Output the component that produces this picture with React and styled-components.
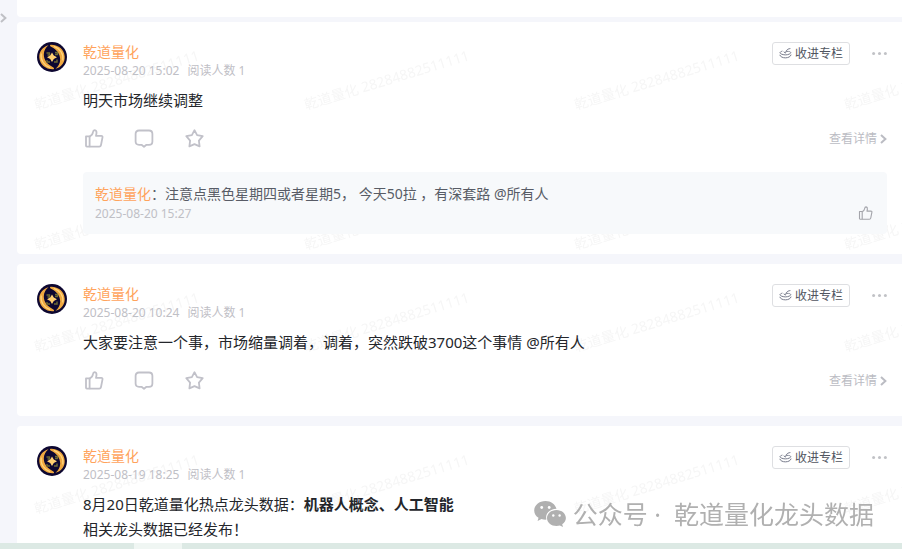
import React from 'react'
import styled, {createGlobalStyle} from 'styled-components'

const GlobalStyle = createGlobalStyle`
  * {
    box-sizing: border-box;
  }

  body {
    margin: 0;
    background: #f5f6fb;
    color: #24262b;
    font-family: 'Noto Sans', 'Noto Sans CJK SC', sans-serif;
    font-size: 15px;
  }

  button {
    display: block;
    font: inherit;
    color: inherit;
    padding: 0;
    border: 0;
    background: none;
    cursor: pointer;
  }

  p {
    margin: 0;
  }

  svg {
    display: block;
    flex: none;
  }
`

const Page = styled.div`
  height: 100vh;
  display: flex;
  flex-direction: column;
  overflow: hidden;
`

const Main = styled.div`
  flex: 1;
  min-height: 0;
  display: flex;
`

const Sidebar = styled.aside`
  width: 17px;
  flex: none;
  padding-top: 13px;
  color: #bfc0c5;
`

const Feed = styled.main`
  flex: 1;
  min-width: 0;
  overflow: hidden;
`

const PreviousCard = styled.div`
  height: 17px;
  margin-bottom: 5px;
  background: #fff;
  border-radius: 0 0 0 4px;
`

const StyledCard = styled.article`
  position: relative;
  display: flex;
  gap: 16px;
  padding: 20px 15px 20px 20px;
  margin-bottom: 10px;
  background: #fff;
  border-radius: 4px 0 0 4px;
  overflow: hidden;
`

const StyledMark = styled.svg`
  position: absolute;
  inset: 0;
  width: 100%;
  height: 100%;
  pointer-events: none;
`

const CardBody = styled.div`
  position: relative;
  flex: 1;
  min-width: 0;
`

const CardHeader = styled.header`
  display: flex;
  align-items: flex-start;
  justify-content: space-between;
`

const Author = styled.a`
  color: #ffa35c;
  font-size: 14px;
  line-height: 20px;
  text-decoration: none;
`

const AuthorInfo = styled.div`
  display: flex;
  flex-direction: column;
`

const Meta = styled.p`
  display: flex;
  gap: 8px;
  color: #bfc0c6;
  font-size: 12px;
  line-height: ${props => (props.$tall ? '20px' : '18px')};
`

const HeaderTools = styled.div`
  display: flex;
  align-items: center;
  gap: 22px;
`

const ColumnButton = styled.button`
  && {
    display: flex;
    align-items: center;
    gap: 3px;
    height: 23px;
    padding: 0 6px;
    border: 1px solid #dedfe2;
    border-radius: 3px;
    background: #fff;
    color: #51555f;
    font-size: 12px;
    line-height: 20px;
  }
`

const Content = styled.div`
  margin-top: 8px;
  line-height: 25px;
`

const Actions = styled.div`
  display: flex;
  align-items: center;
  gap: 30px;
  height: 30px;
  margin-top: 11px;
  padding-left: 1px;
  color: #c1c1c9;
`

const DetailLink = styled.a`
  display: flex;
  align-items: center;
  gap: 3px;
  margin-left: auto;
  color: #bbbcc3;
  font-size: 12px;
  line-height: 20px;
  text-decoration: none;
`

const Reply = styled.div`
  display: flex;
  align-items: flex-end;
  justify-content: space-between;
  margin-top: 18px;
  padding: 12px 14px 10px 12px;
  border-radius: 4px;
  background: #f7f9fb;
  color: #585c66;
  font-size: 14px;
  line-height: 20px;
`

const ReplyLike = styled.button`
  && {
    height: 18px;
    margin-bottom: 2px;
    color: #a4a5ab;
  }
`

const BottomBar = styled.div`
  flex: none;
  display: flex;
  height: 6px;
  padding-left: 134px;
  background: #dce9e4;
`

const BottomTab = styled.div`
  width: 48px;
  background: #f0f6f3;
`

const AccountBadge = styled.div`
  position: fixed;
  right: 28px;
  bottom: 17px;
  display: flex;
  align-items: center;
  gap: 7px;
  color: #b0b0b0;
  font-size: 25px;
  line-height: 36px;
  white-space: pre;
  pointer-events: none;
`

const posts = [
  {
    id: 1,
    time: '2025-08-20 15:02',
    lines: ['明天市场继续调整'],
    actions: true,
    reply: {
      text: '：注意点黑色星期四或者星期5， 今天50拉 ，有深套路 @所有人',
      time: '2025-08-20 15:27'
    }
  },
  {
    id: 2,
    time: '2025-08-20 10:24',
    lines: ['大家要注意一个事，市场缩量调着，调着，突然跌破3700这个事情 @所有人'],
    actions: true
  },
  {
    id: 3,
    time: '2025-08-19 18:25',
    lines: [
      <>8月20日乾道量化热点龙头数据：<b>机器人概念、人工智能</b></>,
      '相关龙头数据已经发布！'
    ]
  }
]

function Chevron({width, height}) {
  return (
    <svg width={width} height={height} viewBox="0 0 7 10" fill="none" stroke="currentColor" strokeWidth="2">
      <path d="M1 1 L5.4 5 L1 9" />
    </svg>
  )
}

function LikeIcon({size, stroke}) {
  return (
    <svg
      width={size}
      height={size}
      viewBox="0 0 20 20"
      fill="none"
      stroke="currentColor"
      strokeWidth={stroke}
      strokeLinejoin="round"
    >
      <path d="M2 7.3 H5.6 V17.6 H2.8 Q2 17.6 2 16.8 Z" />
      <path d="M5.6 7.6 Q8.6 6.2 9 3 Q9.2 1.1 10.7 1.1 Q12.8 1.4 12.5 4.1 L12 6.8 H17.2 Q18.8 6.8 18.5 8.4 L17 16 Q16.7 17.6 15.2 17.6 H5.6" />
    </svg>
  )
}

function CommentIcon() {
  return (
    <svg width="20" height="20" viewBox="0 0 20 20" fill="none" stroke="currentColor" strokeWidth="1.8" strokeLinejoin="round">
      <path d="M5 1.5 H15 Q18.4 1.5 18.4 4.9 V12.4 Q18.4 15.8 15 15.8 H12.5 L10 17.8 L7.5 15.8 H5 Q1.6 15.8 1.6 12.4 V4.9 Q1.6 1.5 5 1.5 Z" />
    </svg>
  )
}

function StarIcon() {
  return (
    <svg width="20" height="20" viewBox="0 0 20 20" fill="none" stroke="currentColor" strokeWidth="1.8" strokeLinejoin="round">
      <path d="M10.5 1.2 L13.1 6.1 L18.7 7.2 L14.9 11.6 L15.6 17.4 L10.5 15.1 L5.4 17.4 L6.1 11.6 L2.3 7.2 L7.9 6.1 Z" />
    </svg>
  )
}

function ColumnIcon() {
  return (
    <svg width="13" height="13" viewBox="0 0 13 13" fill="none" stroke="#777b8b" strokeWidth="1" strokeLinecap="round">
      <path d="M3 4.2 C0 5.2 0.5 6.4 3 7.3 C5.5 8.2 8 8 10 7.2 C12.3 6.2 12.3 5.2 10.6 4.6" />
      <path d="M0.9 8.2 C1.8 11.9 11.2 11.9 12 8" />
      <path d="M5 5 L6.5 6.1 C7 4 7.5 2 11 1.6" />
      <path d="M7.4 4.2 L9.3 4.4" />
    </svg>
  )
}

function MoreIcon() {
  return (
    <svg width="15" height="5" viewBox="0 0 15 5" fill="#c1c2c6">
      <circle cx="1.6" cy="2.5" r="1.5" />
      <circle cx="7.5" cy="2.5" r="1.5" />
      <circle cx="13.4" cy="2.5" r="1.5" />
    </svg>
  )
}

function Avatar() {
  return (
    <svg width="30" height="30" viewBox="0 0 30 30">
      <circle cx="15" cy="15" r="15" fill="#0d0731" />
      <path d="M11.5 3.2 C5 5 2 10 2.3 15.5 C2.8 22.5 8.5 27.6 16.5 27.3 C17.5 26.8 17 25.8 16 25.2 C10.5 22.5 6.8 18 6.8 12.5 C6.8 8.5 8.8 5.5 11.5 3.2 Z" fill="#efa840" />
      <path d="M18.5 26.8 C25 25 28 20 27.7 14.5 C27.2 7.5 21.5 2.4 13.5 2.7 C12.5 3.2 13 4.2 14 4.8 C19.5 7.5 23.2 12 23.2 17.5 C23.2 21.5 21.2 24.5 18.5 26.8 Z" fill="#efa840" />
      <path d="M4.2 11.5 C3.2 18 7 23.5 13 25.6" fill="none" stroke="#ffd67f" strokeWidth="1.2" />
      <path d="M25.8 18.5 C26.8 12 23 6.5 17 4.4" fill="none" stroke="#ffd67f" strokeWidth="1.2" />
      <path d="M9.5 11 H12.5 V13 H10.5 M18 10.5 H20.5 V12.5 H18 M10 18 V20 H13 M17 20 H20 V17.5" fill="none" stroke="#6d6a35" strokeWidth="1.4" />
      <path d="M15 10.5 L16.8 13.4 L20 15.2 L16.8 17 L15 20 L13.2 17 L10 15.2 L13.2 13.4 Z" fill="#ffcf72" />
    </svg>
  )
}

function WechatIcon() {
  return (
    <svg width="32" height="28" viewBox="0 0 32 28" fill="currentColor">
      <path d="M11.5 1 C5.2 1 0.2 5.2 0.2 10.4 C0.2 13.5 1.9 16 4.5 17.7 L3.6 21.1 L7.5 19 C8.9 19.5 10.7 19.7 12.4 19.6 C11 13.6 15.7 9 22.5 8.8 C21.3 4.3 16.9 1 11.5 1 Z" />
      <path d="M22.5 10 C17.2 10 13 13.6 13 18 C13 22.5 17.2 26 22.5 26 C23.7 26 24.8 25.8 25.9 25.5 L29 27.1 L28.2 24.3 C30.5 22.8 31.9 20.6 31.9 18 C31.9 13.6 27.7 10 22.5 10 Z" />
      <g fill="#fff">
        <circle cx="7.7" cy="7.5" r="1.4" />
        <circle cx="15.2" cy="7.5" r="1.4" />
        <circle cx="19.3" cy="15.5" r="1.2" />
        <circle cx="25.6" cy="15.5" r="1.2" />
      </g>
    </svg>
  )
}

function Watermark({id}) {
  return (
    <StyledMark aria-hidden="true">
      <defs>
        <pattern id={id} width="270" height="140" patternUnits="userSpaceOnUse">
          <text x="19" y="88" fontSize="14" fill="#f6f6f6" transform="rotate(-17 19 88)">
            乾道量化 28284882511111
          </text>
        </pattern>
      </defs>
      <rect width="100%" height="100%" fill={`url(#${id})`} />
    </StyledMark>
  )
}

function Card({post}) {
  const {id, time, lines, actions, reply} = post

  return (
    <StyledCard>
      <Watermark id={`mark-${id}`} />
      <Avatar />
      <CardBody>
        <CardHeader>
          <AuthorInfo>
            <Author href="#author">乾道量化</Author>
            <Meta>
              <time>{time}</time>
              <span>阅读人数 1</span>
            </Meta>
          </AuthorInfo>
          <HeaderTools>
            <ColumnButton type="button">
              <ColumnIcon />
              收进专栏
            </ColumnButton>
            <button type="button" aria-label="更多">
              <MoreIcon />
            </button>
          </HeaderTools>
        </CardHeader>
        <Content>
          {lines.map((line, i) => (
            <p key={i}>{line}</p>
          ))}
        </Content>
        {actions && (
          <Actions>
            <button type="button" aria-label="点赞">
              <LikeIcon size="20" stroke="1.8" />
            </button>
            <button type="button" aria-label="评论">
              <CommentIcon />
            </button>
            <button type="button" aria-label="收藏">
              <StarIcon />
            </button>
            <DetailLink href="#detail">
              查看详情
              <Chevron width="7" height="10" />
            </DetailLink>
          </Actions>
        )}
        {reply && (
          <Reply>
            <div>
              <p>
                <Author href="#author">乾道量化</Author>
                {reply.text}
              </p>
              <Meta $tall>
                <time>{reply.time}</time>
              </Meta>
            </div>
            <ReplyLike type="button" aria-label="点赞">
              <LikeIcon size="15" stroke="1.5" />
            </ReplyLike>
          </Reply>
        )}
      </CardBody>
    </StyledCard>
  )
}

export default function App() {
  return (
    <>
      <GlobalStyle />
      <Page>
        <Main>
          <Sidebar>
            <button type="button" aria-label="展开">
              <Chevron width="7" height="10" />
            </button>
          </Sidebar>
          <Feed>
            <PreviousCard />
            {posts.map(post => (
              <Card key={post.id} post={post} />
            ))}
          </Feed>
        </Main>
        <BottomBar>
          <BottomTab />
        </BottomBar>
      </Page>
      <AccountBadge>
        <WechatIcon />
        <span>{'公众号 ·  乾道量化龙头数据'}</span>
      </AccountBadge>
    </>
  )
}
